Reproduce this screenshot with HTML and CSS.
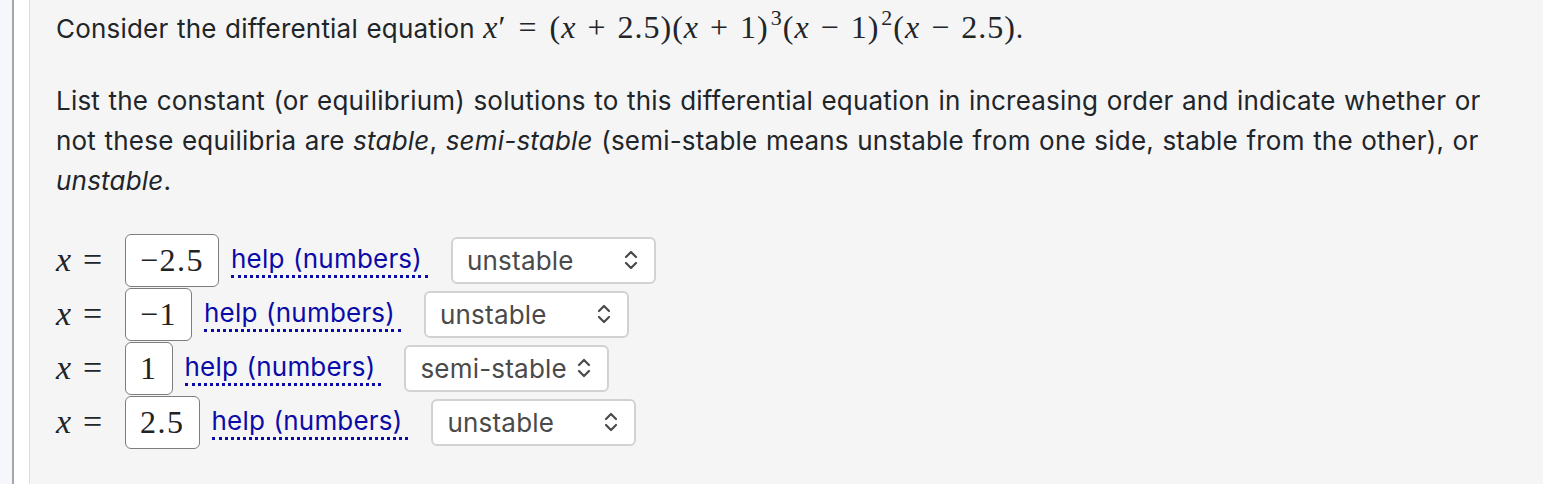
FILE: index.html
```html
<!DOCTYPE html>
<html lang="en">
  <head>
    <meta charset="utf-8" />
    <title>Equilibrium solutions</title>
    <link rel="stylesheet" href="styles.css">
  </head>
  <body>
    <div id="page">
      <div class="rail"></div>
      <div class="gutter"></div>
      <div id="problem">
        <p>
          Consider the differential equation
          <span class="math"><i>x</i>′<span class="rel">=</span>(<i>x</i><span class="op">+</span>2.5)(<i>x</i><span class="op">+</span>1)<sup>3</sup>(<i>x</i><span class="op">−</span>1)<sup>2</sup>(<i>x</i><span class="op">−</span>2.5)</span>.
        </p>
        <p>
          List the constant (or equilibrium) solutions to this differential
          equation in increasing order and indicate whether or not these
          equilibria are <em>stable</em>, <em>semi-stable</em> (semi-stable
          means unstable from one side, stable from the other), or
          <em>unstable</em>.
        </p>

        <div class="answers">
          <div class="row">
            <span class="math lhs"><i>x</i><span class="rel">=</span></span>
            <span class="answer">−2.5</span>
            <a class="help" href="#">help (numbers)</a>
            <div class="select">
              <span>unstable</span>
              <svg width="14" height="22" viewBox="0 0 14 22"><path d="M2 8 L7 3 L12 8 M2 14 L7 19 L12 14" fill="none" stroke="#4a4a4a" stroke-width="2.2" stroke-linecap="round" stroke-linejoin="round"/></svg>
            </div>
          </div>
          <div class="row">
            <span class="math lhs"><i>x</i><span class="rel">=</span></span>
            <span class="answer">−1</span>
            <a class="help" href="#">help (numbers)</a>
            <div class="select">
              <span>unstable</span>
              <svg width="14" height="22" viewBox="0 0 14 22"><path d="M2 8 L7 3 L12 8 M2 14 L7 19 L12 14" fill="none" stroke="#4a4a4a" stroke-width="2.2" stroke-linecap="round" stroke-linejoin="round"/></svg>
            </div>
          </div>
          <div class="row">
            <span class="math lhs"><i>x</i><span class="rel">=</span></span>
            <span class="answer">1</span>
            <a class="help" href="#">help (numbers)</a>
            <div class="select">
              <span>semi-stable</span>
              <svg width="14" height="22" viewBox="0 0 14 22"><path d="M2 8 L7 3 L12 8 M2 14 L7 19 L12 14" fill="none" stroke="#4a4a4a" stroke-width="2.2" stroke-linecap="round" stroke-linejoin="round"/></svg>
            </div>
          </div>
          <div class="row">
            <span class="math lhs"><i>x</i><span class="rel">=</span></span>
            <span class="answer">2.5</span>
            <a class="help" href="#">help (numbers)</a>
            <div class="select">
              <span>unstable</span>
              <svg width="14" height="22" viewBox="0 0 14 22"><path d="M2 8 L7 3 L12 8 M2 14 L7 19 L12 14" fill="none" stroke="#4a4a4a" stroke-width="2.2" stroke-linecap="round" stroke-linejoin="round"/></svg>
            </div>
          </div>
        </div>
      </div>
    </div>
  </body>
</html>
```

FILE: styles.css
```css
* {
  margin: 0;
  padding: 0;
  box-sizing: border-box;
}

html,
body {
  height: 100%;
}

body {
  background: #f5f7fa;
  font-family: Inter, "Liberation Sans", Arial, sans-serif;
  font-size: 26px;
  letter-spacing: 0.2px;
  word-spacing: 1px;
  color: #212529;
}

#page {
  display: flex;
  height: 100%;
  padding-left: 12px;
}

.rail {
  width: 2px;
  background: #a6a6a6;
}

.gutter {
  width: 16px;
  background: #fff;
  border-right: 1px solid #dcdcdc;
}

#problem {
  flex: 1;
  background: #f5f5f5;
  padding: 7px 40px 0 26px;
}

p {
  line-height: 40px;
  margin-bottom: 32px;
}

.math {
  font-family: "Liberation Serif", "Times New Roman", serif;
  font-size: 32px;
  letter-spacing: 1px;
  word-spacing: 0;
  white-space: nowrap;
}

.math i {
  font-style: italic;
}

.math .op {
  padding: 0 11px;
}

.math .rel {
  padding: 0 12px;
}

.math sup {
  font-size: 22px;
  line-height: 0;
  vertical-align: 13px;
  margin-left: 2px;
}

.answers {
  margin-top: 32px;
}

.row {
  display: flex;
  align-items: center;
  height: 54px;
}

.lhs {
  width: 69px;
  font-size: 34px;
}

.lhs .rel {
  padding-left: 11px;
  padding-right: 0;
}

.answer {
  display: flex;
  align-items: center;
  height: 53px;
  padding: 0 14px;
  border: 1.5px solid #7d7d7d;
  border-radius: 6px;
  background: #fff;
  font-family: "Liberation Serif", "Times New Roman", serif;
  font-size: 32px;
  letter-spacing: 1.5px;
  color: #222;
}

.help {
  margin-left: 12px;
  padding-right: 6px;
  color: #0b0ba8;
  text-decoration: none;
  border-bottom: 3px dotted #0b0ba8;
  line-height: 32px;
}

.select {
  display: flex;
  align-items: center;
  justify-content: space-between;
  width: 205px;
  height: 47px;
  margin-left: 23px;
  padding: 0 16px 0 14px;
  background: #fff;
  border: 2px solid #d2d2d2;
  border-radius: 6px;
  color: #4a4a4a;
}
```
